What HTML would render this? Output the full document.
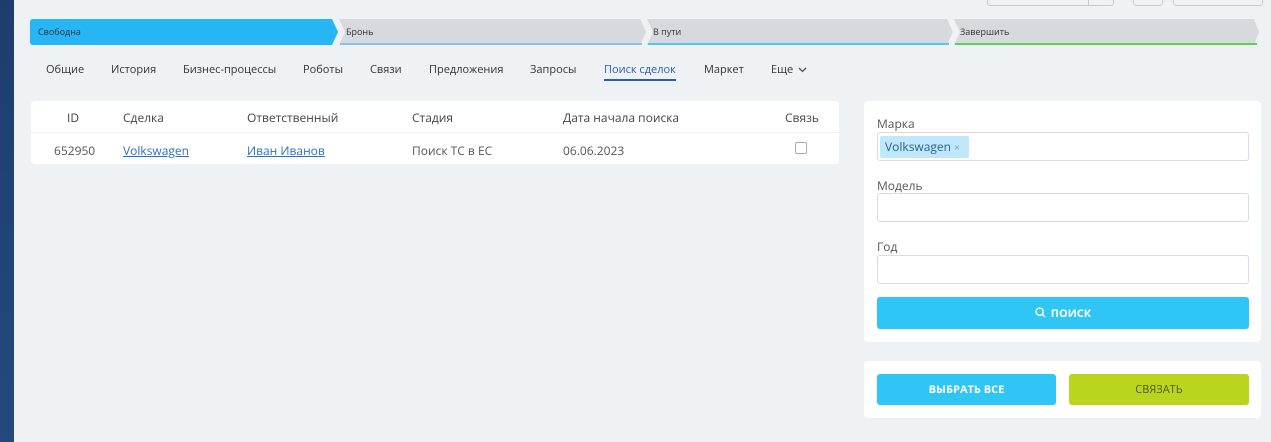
<!DOCTYPE html>
<html><head><meta charset="utf-8"><style>
*{box-sizing:border-box;margin:0;padding:0}
body{width:1271px;height:442px;overflow:hidden;background:#eef2f5;font-family:"Open Sans","Liberation Sans",sans-serif;position:relative;color:#333}
.side{position:absolute;left:0;top:0;width:14px;height:442px;background:linear-gradient(#1d3d6e,#24497c)}
.abs{position:absolute}
.stage{position:absolute;top:19px;height:26px;font-size:9px;color:#333;padding-left:8px;line-height:26px}
.tabs span{position:absolute;top:62px;font-size:11px;color:#333}
.panel{position:absolute;background:#fff;border-radius:4px}
.th{position:absolute;top:109px;font-size:12px;color:#444}
.td{position:absolute;top:142px;font-size:12px;color:#555}
.lnk{color:#2a6fc4;text-decoration:underline}
.lbl{position:absolute;left:877px;font-size:12px;color:#555}
.inp{position:absolute;left:877px;width:372px;height:29px;border:1px solid #d8dce0;border-radius:3px;background:#fff}
.btn{position:absolute;height:31px;border-radius:3px;font-size:11px;font-weight:bold;text-align:center;line-height:31px}
</style></head><body>
<div class="side"></div>
<div class="abs" style="left:987px;top:-4px;width:127px;height:10px;border:1px solid #c8ccd0;border-radius:3px"></div>
<div class="abs" style="left:1088px;top:-4px;width:1px;height:10px;background:#c8ccd0"></div>
<div class="abs" style="left:1133px;top:-4px;width:30px;height:10px;border:1px solid #c8ccd0;border-radius:3px"></div>
<div class="abs" style="left:1173px;top:-4px;width:90px;height:10px;border:1px solid #c8ccd0;border-radius:3px"></div>
<svg class="abs" style="left:30px;top:19px" width="1232" height="26">
<path d="M3 0H302L308 13L302 26H3Q0 26 0 23V3Q0 0 3 0Z" fill="#26b6f6"/>
<path d="M309 0H610L616 13L610 26H309L315 13Z" fill="#d6d9dd"/><rect x="310" y="24" width="302" height="2" fill="#8fc0ea"/>
<path d="M617 0H917L923 13L917 26H617L623 13Z" fill="#d6d9dd"/><rect x="618" y="24" width="301" height="2" fill="#52c8e6"/>
<path d="M924 0H1224L1229 13L1224 26H924L930 13Z" fill="#d6d9dd"/><rect x="925" y="24" width="302" height="2" fill="#56d64c"/>
</svg>
<div class="stage" style="left:30px">Свободна</div>
<div class="stage" style="left:338px">Бронь</div>
<div class="stage" style="left:645px">В пути</div>
<div class="stage" style="left:952px">Завершить</div>
<div class="tabs">
<span style="left:46px">Общие</span><span style="left:111px">История</span><span style="left:183px">Бизнес-процессы</span><span style="left:303px">Роботы</span><span style="left:370px">Связи</span><span style="left:429px">Предложения</span><span style="left:530px">Запросы</span><span style="left:604px;color:#2a5fa8">Поиск сделок</span><span style="left:704px">Маркет</span><span style="left:771px">Еще <svg width="9" height="6" style="margin-left:2px"><path d="M1 1L4.5 4.5L8 1" stroke="#555" stroke-width="1.3" fill="none"/></svg></span>
</div>
<div class="abs" style="left:604px;top:79px;width:72px;height:2px;background:#2a5fa8"></div>
<div class="panel" style="left:31px;top:101px;width:808px;height:63px"></div>
<div class="abs" style="left:31px;top:132px;width:808px;height:1px;background:#edf0f3"></div>
<div class="th" style="left:67px">ID</div><div class="th" style="left:123px">Сделка</div><div class="th" style="left:247px">Ответственный</div><div class="th" style="left:412px">Стадия</div><div class="th" style="left:563px">Дата начала поиска</div><div class="th" style="left:785px">Связь</div>
<div class="td" style="left:54px">652950</div><div class="td lnk" style="left:123px">Volkswagen</div><div class="td lnk" style="left:247px">Иван Иванов</div><div class="td" style="left:412px">Поиск ТС в ЕС</div><div class="td" style="left:563px">06.06.2023</div>
<div class="abs" style="left:795px;top:142px;width:12px;height:12px;border:1px solid #aaa;border-radius:2px"></div>
<div class="panel" style="left:864px;top:101px;width:397px;height:241px"></div>
<div class="lbl" style="top:115px">Марка</div>
<div class="inp" style="top:132px"></div>
<div class="abs" style="left:880px;top:136px;width:89px;height:22px;background:#bfe9fb;border-radius:2px;font-size:12px;color:#2a5f8f;line-height:22px;padding-left:5px">Volkswagen <span style="color:#89a;font-size:10px">×</span></div>
<div class="lbl" style="top:177px">Модель</div>
<div class="inp" style="top:193px"></div>
<div class="lbl" style="top:238px">Год</div>
<div class="inp" style="top:255px"></div>
<div class="btn" style="left:877px;top:297px;width:372px;height:32px;line-height:33px;background:#2fc6f6;color:#fff"><svg width="11" height="11" style="vertical-align:-1px;margin-right:5px"><circle cx="4.7" cy="4.7" r="3.6" stroke="#fff" stroke-width="1.4" fill="none"/><path d="M7.3 7.3L10 10" stroke="#fff" stroke-width="1.4"/></svg>ПОИСК</div>
<div class="panel" style="left:864px;top:361px;width:397px;height:57px"></div>
<div class="btn" style="left:877px;top:374px;width:179px;background:#2fc6f6;color:#fff">ВЫБРАТЬ ВСЕ</div>
<div class="btn" style="left:1069px;top:374px;width:180px;background:#bbd51e;color:#4a5a1a;font-weight:normal">СВЯЗАТЬ</div>
</body></html>
